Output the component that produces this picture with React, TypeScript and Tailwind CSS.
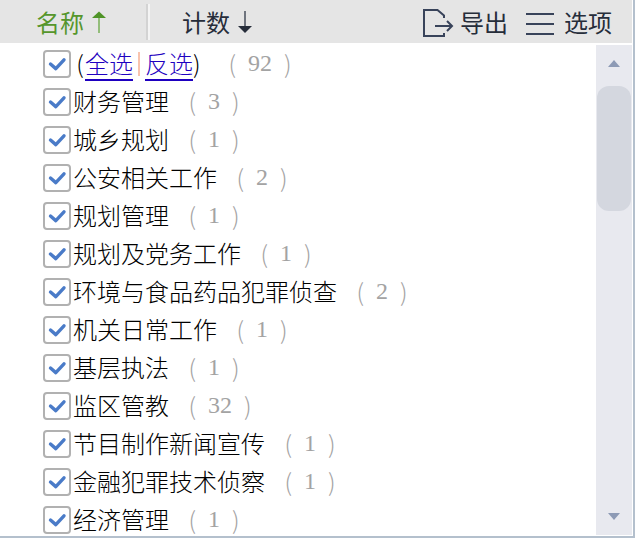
import React, { useState } from "react";

type FilterItem = {
  name: string;
  count: number;
};

const items: FilterItem[] = [
  { name: "财务管理", count: 3 },
  { name: "城乡规划", count: 1 },
  { name: "公安相关工作", count: 2 },
  { name: "规划管理", count: 1 },
  { name: "规划及党务工作", count: 1 },
  { name: "环境与食品药品犯罪侦查", count: 2 },
  { name: "机关日常工作", count: 1 },
  { name: "基层执法", count: 1 },
  { name: "监区管教", count: 32 },
  { name: "节目制作新闻宣传", count: 1 },
  { name: "金融犯罪技术侦察", count: 1 },
  { name: "经济管理", count: 1 },
];

const TOTAL = 92;

const Tick: React.FC<{
  id: string;
  label?: string;
  checked: boolean;
  onChange: () => void;
}> = ({ id, label, checked, onChange }) => (
  <span className="relative size-7 shrink-0">
    <input
      id={id}
      type="checkbox"
      aria-label={label}
      checked={checked}
      onChange={onChange}
      className="block size-7 appearance-none rounded-sm border-2 border-[#b1b1b1] bg-white"
    />
    {checked && (
      <svg
        viewBox="0 0 28 28"
        className="pointer-events-none absolute inset-0 size-7"
        fill="none"
        stroke="#4a7bc8"
        strokeWidth="3.4"
      >
        <path d="M7.5 14 L12.8 18.6 L21 9.8" strokeLinecap="round" strokeLinejoin="round" />
      </svg>
    )}
  </span>
);

const Count: React.FC<{ value: number }> = ({ value }) => (
  <span className="ml-[15px] flex text-[#a3a3a3]">
    <span className="w-3 text-right font-light">(</span>
    <span className="mx-3 font-['Liberation_Serif',serif]">{value}</span>
    <span className="w-3 font-light">)</span>
  </span>
);

const App: React.FC = () => {
  const [checked, setChecked] = useState<boolean[]>(items.map(() => true));

  const allChecked = checked.every(Boolean);

  const setAll = (value: boolean) => setChecked(items.map(() => value));

  const toggle = (index: number) => {
    setChecked((prev) => prev.map((c, i) => (i === index ? !c : c)));
  };

  return (
    <div className="flex h-screen flex-col bg-white pr-px pb-0.5 font-['Noto_Sans_CJK_SC',sans-serif] text-2xl leading-9 text-black">
      <div className="flex min-h-0 flex-1 flex-col border-r-2 border-b-2 border-[#b4c0cd] pr-px">
        {/* Column headers and actions */}
        <header className="flex h-[43px] shrink-0 items-center bg-[#e5e5e5] pr-5 pl-9 text-[#262d3a]">
          <button type="button" className="flex items-center gap-1.5 text-[#56962c]">
            名称
            <svg width="16" height="22" viewBox="0 0 16 22">
              <path d="M9 7 V22" stroke="#93bd7a" strokeWidth="2" />
              <path d="M9 0.5 L16 7 H2 Z" fill="#4f9427" />
            </svg>
          </button>
          <span className="ml-10 h-9 w-1 border-r-2 border-l-2 border-l-[#d3d3d3] border-r-[#f4f4f4]" />
          <button type="button" className="ml-8 flex items-center gap-1.5">
            计数
            <svg width="16" height="22" viewBox="0 0 16 22">
              <path d="M9 0 V15" stroke="#6f747e" strokeWidth="2" />
              <path d="M9 22 L16 15 H2 Z" fill="#262d3a" />
            </svg>
          </button>

          <div className="ml-auto flex items-center gap-4">
            <button type="button" className="flex items-center gap-1.5">
              <svg
                width="32"
                height="30"
                viewBox="0 0 32 30"
                fill="none"
                stroke="#38435a"
                strokeWidth="2"
              >
                <path d="M22 11 V8.5 L15.5 3 H2 V29 H22 V26" />
                <path d="M13 19 H30 M25 14 L30 19 L25 24" />
              </svg>
              导出
            </button>
            <button type="button" className="flex items-center gap-2">
              <svg width="32" height="28" viewBox="0 0 32 28" stroke="#38435a" strokeWidth="2">
                <path d="M2 6 H30 M2 16 H30 M2 26 H30" />
              </svg>
              选项
            </button>
          </div>
        </header>

        <div className="flex min-h-0 flex-1 pt-0.5">
          <ul className="flex-1 overflow-hidden pl-[43px] font-light">
            <li className="flex h-[38px] items-center">
              <Tick
                id="all"
                label="全选"
                checked={allChecked}
                onChange={() => setAll(!allChecked)}
              />
              <span className="ml-1 flex items-center">
                <span className="w-2.5 pb-0.5 text-center">(</span>
                <a
                  href="#all"
                  onClick={() => setAll(true)}
                  className="h-[34px] border-b-2 border-[#1e00c0] leading-8 text-[#1e00c0]"
                >
                  全选
                </a>
                <span className="mx-[5px] h-6 w-0.5 bg-[#f9c4ae]" />
                <a
                  href="#invert"
                  onClick={() => setChecked((prev) => prev.map((c) => !c))}
                  className="h-[34px] border-b-2 border-[#1e00c0] leading-8 text-[#1e00c0]"
                >
                  反选
                </a>
                <span className="w-3 pb-0.5">)</span>
              </span>
              <span className="ml-1 pb-0.5">
                <Count value={TOTAL} />
              </span>
            </li>

            {items.map((item, index) => (
              <li key={item.name} className="flex h-[38px] items-center">
                <Tick id={`item-${index}`} checked={checked[index]} onChange={() => toggle(index)} />
                <label htmlFor={`item-${index}`} className="ml-0.5 flex items-center pb-0.5">
                  {item.name}
                  <Count value={item.count} />
                </label>
              </li>
            ))}
          </ul>

          {/* Scroll bar */}
          <div className="mb-px flex w-9 flex-col items-center bg-[#e8e9ef] pt-[15px] pb-[15px]">
            <svg width="12" height="7" viewBox="0 0 12 7" fill="#8d9ab5">
              <path d="M6 0 L12 7 H0 Z" />
            </svg>
            <div className="mt-[19px] h-[125px] w-[34px] rounded-xl bg-[#d4d7df]" />
            <svg className="mt-auto" width="12" height="7" viewBox="0 0 12 7" fill="#8d9ab5">
              <path d="M0 0 H12 L6 7 Z" />
            </svg>
          </div>
        </div>
      </div>
    </div>
  );
};

export default App;
